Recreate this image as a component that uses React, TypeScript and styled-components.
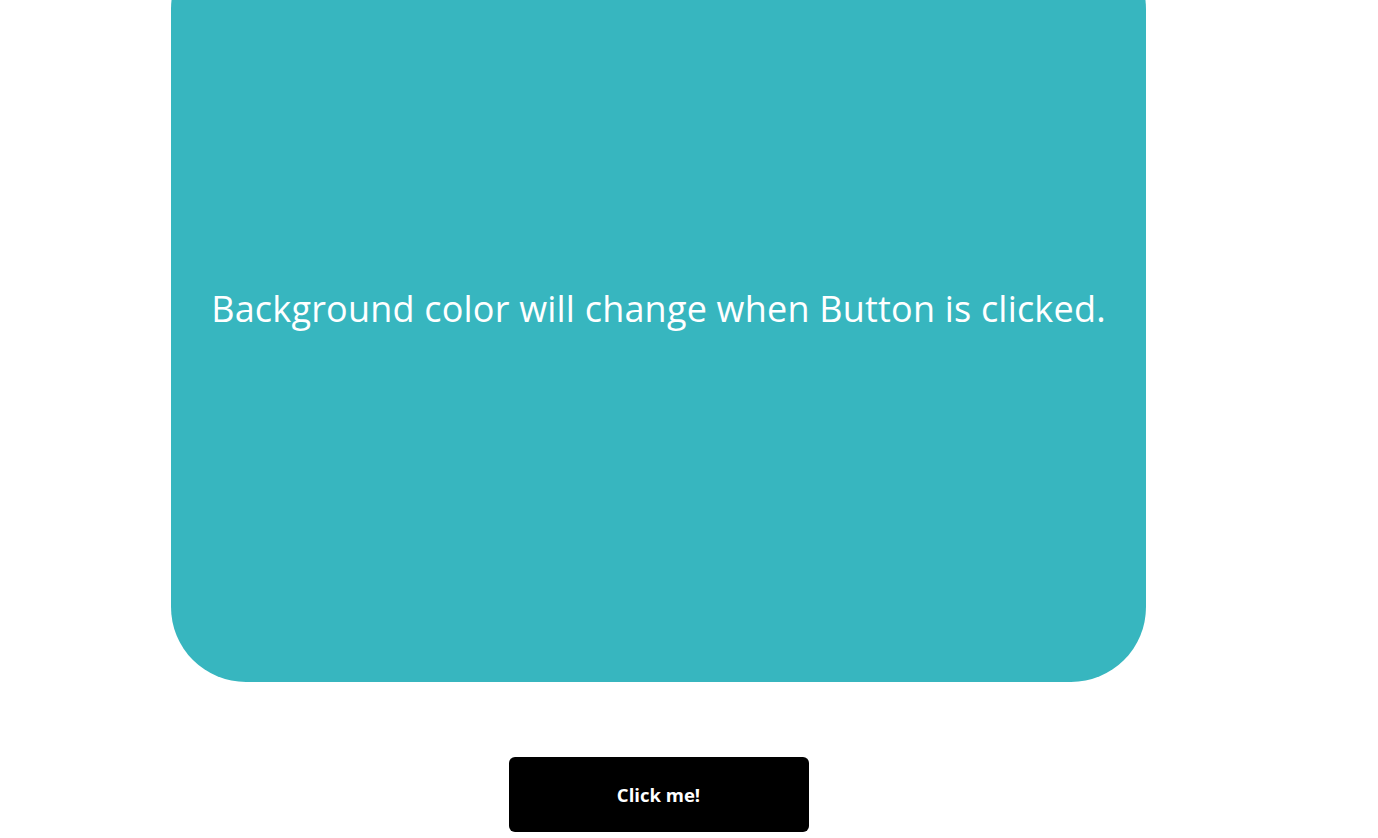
import * as React from 'react'
import styled, { createGlobalStyle } from 'styled-components'

const colors = ['#37b6bf', '#e76f51', '#2a9d8f', '#8e7dbe', '#f4a261']

export default function App() {
  const [index, setIndex] = React.useState(0)

  return (
    <>
      <GlobalStyle />
      <Wrapper>
        <ColorBox bg={colors[index]}>
          <Message>Background color will change when Button is clicked.</Message>
        </ColorBox>
        <Button onClick={() => setIndex((index + 1) % colors.length)}>Click me!</Button>
      </Wrapper>
    </>
  )
}

const GlobalStyle = createGlobalStyle`
  html, body {
    margin: 0;
    padding: 0;
    background: #ffffff;
    overflow: hidden;
  }
  body {
    font-family: "Trebuchet MS", "Open Sans", "DejaVu Sans", sans-serif;
  }
`

const Wrapper = styled.div`
  width: 975px;
  margin: 0 0 0 171px;
  display: flex;
  flex-direction: column;
  align-items: center;
`

const ColorBox = styled.div<{ bg: string }>`
  width: 100%;
  height: 748px;
  margin-top: -66px;
  border-radius: 75px;
  background: ${p => p.bg};
  display: flex;
  align-items: center;
  justify-content: center;
`

const Message = styled.p`
  margin: 0;
  color: #ffffff;
  font-size: 36px;
  letter-spacing: 0.2px;
  font-weight: 400;
  text-align: center;
`

const Button = styled.button`
  margin-top: 75px;
  width: 300px;
  height: 75px;
  border: none;
  border-radius: 6px;
  background: #000000;
  color: #ffffff;
  font-family: inherit;
  font-size: 18.5px;
  font-weight: 700;
  cursor: pointer;
`
